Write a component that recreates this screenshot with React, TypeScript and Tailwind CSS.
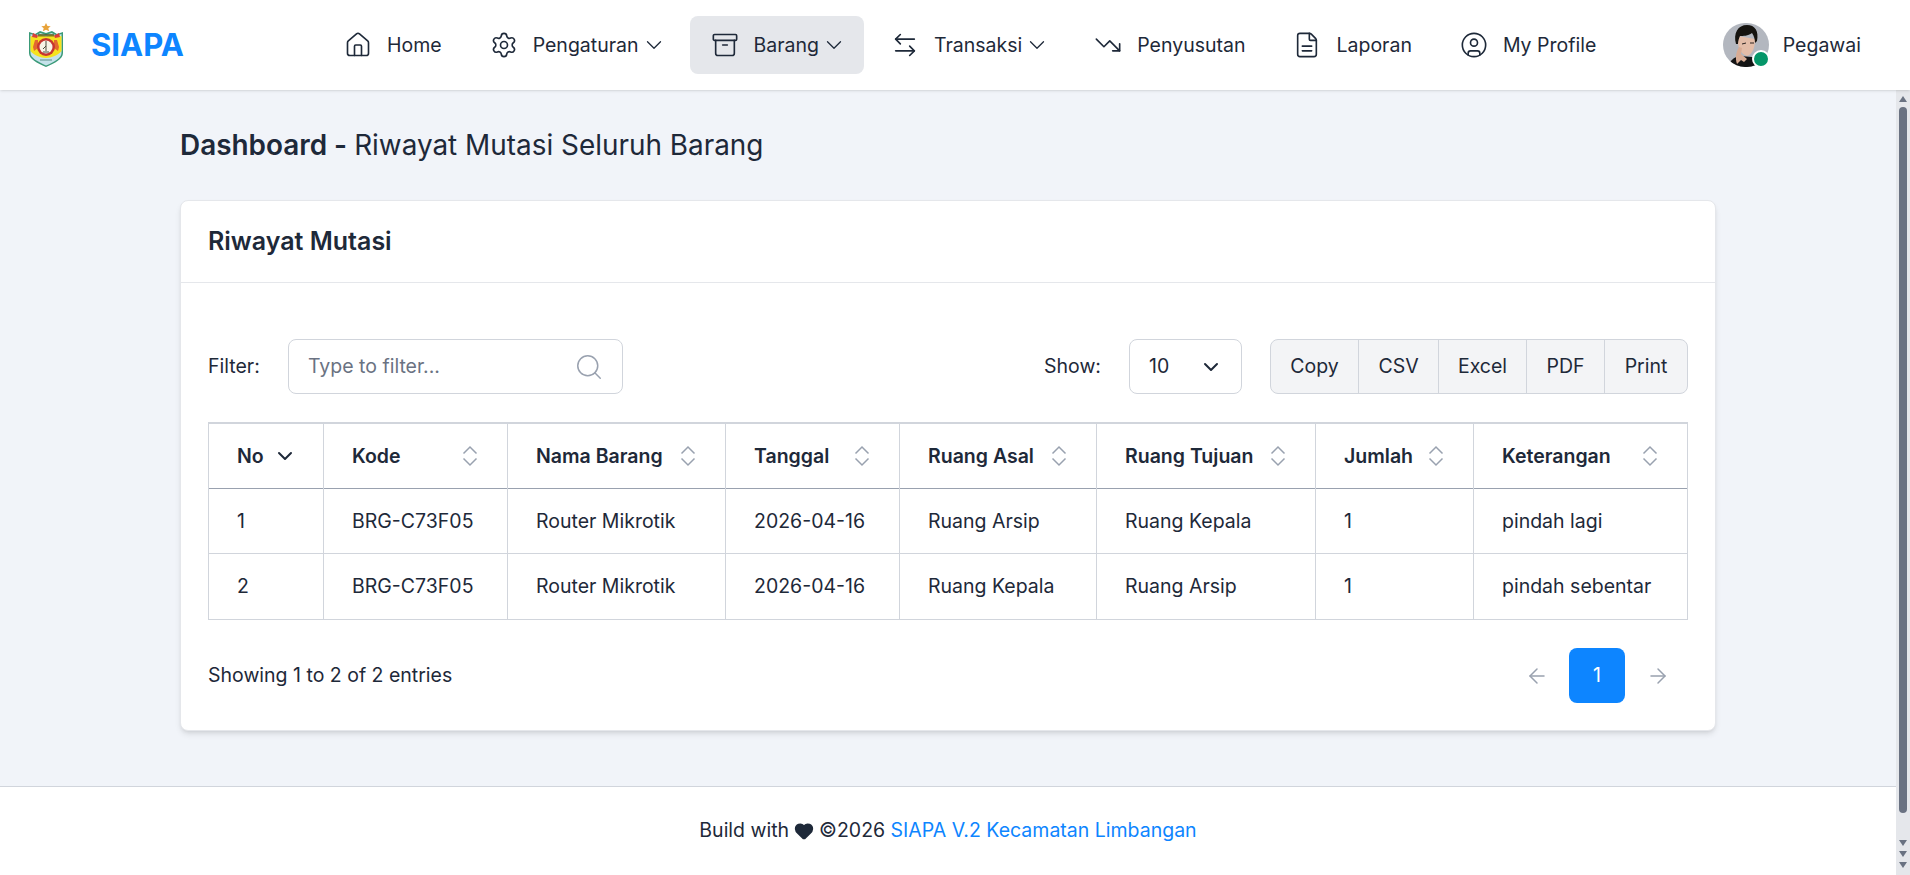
import {
  ArrowLeft,
  ArrowRight,
  ArrowLeftRight,
  Archive,
  ChevronDown,
  CircleUser,
  Heart,
  House,
  Search,
  Settings,
  TrendingDown,
} from "lucide-react";

const cols = [
  { label: "No", w: "w-[115px]" },
  { label: "Kode", w: "w-[184px]" },
  { label: "Nama Barang", w: "w-[218px]" },
  { label: "Tanggal", w: "w-[174px]" },
  { label: "Ruang Asal", w: "w-[197px]" },
  { label: "Ruang Tujuan", w: "w-[219px]" },
  { label: "Jumlah", w: "w-[158px]" },
  { label: "Keterangan", w: "w-[214px]" },
];

const rows = [
  ["1", "BRG-C73F05", "Router Mikrotik", "2026-04-16", "Ruang Arsip", "Ruang Kepala", "1", "pindah lagi"],
  ["2", "BRG-C73F05", "Router Mikrotik", "2026-04-16", "Ruang Kepala", "Ruang Arsip", "1", "pindah sebentar"],
];

function Logo() {
  return (
    <svg width="36" height="44" viewBox="0 0 36 44">
      <path d="M18 0l1.5 3 3.2.3-2.4 2 .8 3-3.1-1.6-3.1 1.6.8-3-2.4-2 3.2-.3z" fill="#e8a33a" />
      <path d="M1 9l6 2 5-3 6 2 6-2 5 3 6-2v21c0 6-8 10-17 14C9 40 1 36 1 30z" fill="#3a9a78" />
      <path d="M2.500 11l5 1.500 5-2.500 5.500 2 5.500-2 5 2.500 5-1.500v19c0 5-7 9-15.500 12.500C9.500 38.500 2.500 35 2.500 30z" fill="#c5e2ea" />
      <path d="M2.500 13l5 1 5-2.500 5.500 2 5.500-2 5 2.500 5-1v15c-3 4-10 7-15.500 7S5.500 32 2.500 28z" fill="#f6e21e" />
      <path d="M5 10l5 2.500-1 2.500-5-1zM31 10l-5 2.500 1 2.500 5-1z" fill="#d9403a" />
      <rect x="10" y="11" width="16" height="2.500" fill="#55561f" opacity="0.75" />
      <path d="M7 17h3v8l-4 3-1-4zM29 17h-3v8l4 3 1-4z" fill="#e2682f" />
      <circle cx="18" cy="24" r="9" fill="#c7352f" />
      <circle cx="18" cy="24" r="6.500" fill="#f7f3e6" />
      <path d="M18 18v10M15 29h6M18 23l-3 3" stroke="#4b4b3b" strokeWidth="1" fill="none" />
      <path d="M12 37h12" stroke="#5c8f86" strokeWidth="1" />
    </svg>
  );
}

function Avatar() {
  return (
    <svg width="46" height="44" viewBox="0 0 46 44" className="rounded-full">
      <rect width="46" height="44" fill="#b3b7bf" />
      <path d="M5 44c1-6 6-10 12-11l12 1c5 2 9 5 11 10z" fill="#141414" />
      <path d="M15 13c-1 9 1 17 9 20 6-2 8-9 8-17z" fill="#e3bda8" />
      <path d="M13 21C10 10 15 2 24 2c8 0 12 6 10 16l-2 2c0-4-1-7-3-10-4 3-9 3-12 3-1 2-2 5-2 8z" fill="#15130f" />
      <path d="M14 41c-2-6-1-12 2-17l3 1-1 6 6 5-3 3-3-2z" fill="#d8ac94" />
      <path d="M19 21l4-1M27 20l4 0" stroke="#2a2320" strokeWidth="1" />
    </svg>
  );
}

function NavItem({
  icon,
  label,
  caret,
  active,
}: {
  icon: React.ReactNode;
  label: string;
  caret?: boolean;
  active?: boolean;
}) {
  return (
    <a
      className={`flex h-[58px] items-center rounded-lg pl-[21px] ${caret ? "pr-[17px]" : "pr-[21px]"} ${active ? "bg-gray-200" : ""}`}
    >
      {icon}
      <span className="ml-[15px] mt-[2px]">{label}</span>
      {caret && <ChevronDown className="ml-[2px] size-[26px]" strokeWidth={1.2} />}
    </a>
  );
}

function Arrow({ down }: { down?: boolean }) {
  return (
    <div
      className={`size-0 border-x-[4px] border-x-transparent ${down ? "border-t-[6px] border-t-gray-500" : "border-b-[6px] border-b-gray-500"}`}
    />
  );
}

function SortIcon() {
  return (
    <svg width="16" height="22" viewBox="0 0 16 22" fill="none" className="shrink-0 text-gray-400" stroke="currentColor" strokeWidth="1.5">
      <path d="M1.500 8.500 8 2l6.500 6.500M1.500 13.500 8 20l6.500-6.500" />
    </svg>
  );
}

function ReportIcon() {
  return (
    <svg width="28" height="28" viewBox="0 0 24 24" fill="none" stroke="currentColor" strokeWidth="1.4" strokeLinecap="round" strokeLinejoin="round">
      <path d="M6 22a2 2 0 0 1-2-2V4a2 2 0 0 1 2-2h8a2.400 2.400 0 0 1 1.706.706l3.588 3.588A2.400 2.400 0 0 1 20 8v12a2 2 0 0 1-2 2z" />
      <path d="M14 2v5a1 1 0 0 0 1 1h5" />
      <path d="M16 13H8" />
      <path d="M16 17H8" />
    </svg>
  );
}

export default function App() {
  const iconClass = "size-7";
  return (
    <div className="flex h-[875px] w-[1910px] flex-col overflow-hidden bg-white font-['Inter',sans-serif] text-[19.5px] text-gray-800">
      <header className="relative z-10 flex h-[90px] shrink-0 items-center bg-white pl-7 shadow-sm">
        <div className="flex w-[295px] shrink-0 items-center">
          <Logo />
          <span className="ml-[27px] text-[31px] font-bold text-[#0d85ff]">SIAPA</span>
        </div>
        <nav className="flex items-center gap-[6px]">
          <NavItem icon={<House className={iconClass} strokeWidth={1.4} />} label="Home" />
          <NavItem icon={<Settings className={iconClass} strokeWidth={1.4} />} label="Pengaturan" caret />
          <NavItem icon={<Archive className={iconClass} strokeWidth={1.4} />} label="Barang" caret active />
          <NavItem icon={<ArrowLeftRight className={iconClass} strokeWidth={1.4} />} label="Transaksi" caret />
          <NavItem icon={<TrendingDown className={iconClass} strokeWidth={1.4} />} label="Penyusutan" />
          <NavItem icon={<ReportIcon />} label="Laporan" />
          <NavItem icon={<CircleUser className={iconClass} strokeWidth={1.4} />} label="My Profile" />
        </nav>
        <div className="ml-auto flex items-center gap-[14px] pr-[49px]">
          <div className="relative">
            <Avatar />
            <span className="absolute bottom-[-1px] right-[-1px] size-[18px] rounded-full border-2 border-white bg-[#059669]" />
          </div>
          <span className="mt-[2px]">Pegawai</span>
        </div>
      </header>

      <div className="flex min-h-0 flex-1">
        <div className="flex min-w-0 flex-1 flex-col">
          <main className="flex-1 bg-[#f1f4f9] px-[180px] pt-[40px]">
            <h1 className="text-[27.9px] leading-[30px]">
              <span className="font-semibold">Dashboard - </span>Riwayat Mutasi Seluruh Barang
            </h1>
            <section className="mt-[40px] w-[1536px] rounded-lg border border-gray-200 bg-white shadow-md">
              <div className="flex h-[82px] items-center border-b border-gray-200 px-[27px]">
                <h2 className="text-[25px] font-semibold">Riwayat Mutasi</h2>
              </div>
              <div className="px-[27px] pt-[56px]">
                <div className="flex h-[55px] items-center">
                  <label className="w-[80px]">Filter:</label>
                  <div className="flex h-full w-[335px] items-center justify-between rounded-lg border border-gray-300 pl-[19px] pr-[18px] text-gray-500">
                    <span>Type to filter...</span>
                    <Search className="size-[30px] text-gray-400" strokeWidth={1.2} />
                  </div>
                  <label className="ml-auto">Show:</label>
                  <div className="ml-7 flex h-full w-[113px] items-center justify-between rounded-lg border border-gray-300 pl-[19px] pr-[18px]">
                    <span>10</span>
                    <ChevronDown className="size-6" strokeWidth={2} />
                  </div>
                  <div className="ml-7 flex h-full w-[418px] rounded-lg border border-gray-300 bg-gray-100">
                    <button className="w-[88px] border-r border-gray-300">Copy</button>
                    <button className="w-[80px] border-r border-gray-300">CSV</button>
                    <button className="w-[88px] border-r border-gray-300">Excel</button>
                    <button className="w-[78px] border-r border-gray-300">PDF</button>
                    <button className="flex-1">Print</button>
                  </div>
                </div>

                <table className="mt-7 w-full table-fixed border-collapse">
                  <thead>
                    <tr className="h-[65px] border-t-2 border-b border-t-gray-300 border-b-gray-400">
                      {cols.map((c) => (
                        <th
                          key={c.label}
                          className={`${c.w} border-x border-x-gray-300 pl-7 pr-[29px] text-left font-semibold`}
                        >
                          <div className="flex items-center justify-between">
                            <span className="mt-[2px]">{c.label}</span>
                            {c.label === "No" ? (
                              <ChevronDown className="-mr-[3px] size-6" strokeWidth={2} />
                            ) : (
                              <SortIcon />
                            )}
                          </div>
                        </th>
                      ))}
                    </tr>
                  </thead>
                  <tbody>
                    {rows.map((r, i) => (
                      <tr key={i} className={`border-b border-gray-300 ${i === 0 ? "h-[65px]" : "h-[66px]"}`}>
                        {r.map((v, j) => (
                          <td key={j} className="border-x border-gray-300 pl-7 pt-[2px]">
                            {v}
                          </td>
                        ))}
                      </tr>
                    ))}
                  </tbody>
                </table>

                <div className="mt-7 flex h-[56px] items-center">
                  <span>Showing 1 to 2 of 2 entries</span>
                  <div className="ml-auto flex items-center">
                    <ArrowLeft className="mr-5 size-6 text-gray-400" strokeWidth={1.5} />
                    <span className="flex h-[55px] w-[56px] items-center justify-center rounded-lg bg-[#0d85ff] text-white">
                      1
                    </span>
                    <ArrowRight className="ml-[21px] mr-[18px] size-6 text-gray-400" strokeWidth={1.5} />
                  </div>
                </div>
                <div className="h-[26px]" />
              </div>
            </section>
          </main>
          <footer className="flex h-[89px] shrink-0 items-center justify-center border-t border-gray-300 bg-white">
            <span>Build with</span>
            <Heart className="mx-[5px] size-5 fill-gray-800" />
            <span>©2026&nbsp;</span>
            <a className="text-[#0d85ff]">SIAPA V.2 Kecamatan Limbangan</a>
          </footer>
        </div>
        <div className="flex w-[14px] shrink-0 flex-col items-center bg-gray-200 pb-[7px] pt-[6px]">
          <Arrow />
          <div className="mt-[5px] h-[706px] w-2 rounded-full bg-gray-500" />
          <div className="mt-auto flex flex-col items-center gap-[5px]">
            <Arrow down />
            <Arrow down />
            <Arrow down />
          </div>
        </div>
      </div>
    </div>
  );
}
